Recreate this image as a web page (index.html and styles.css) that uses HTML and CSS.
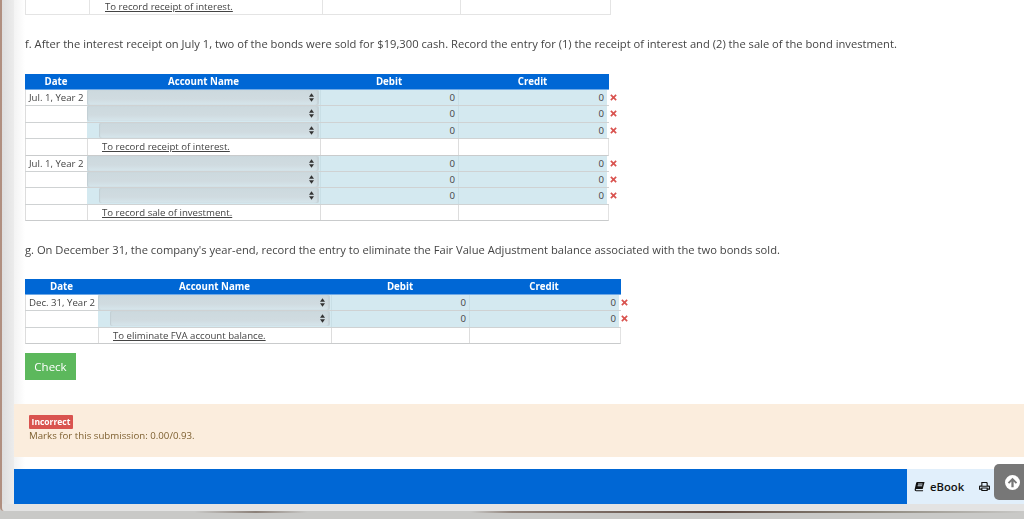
FILE: index.html
```html
<!DOCTYPE html>
<html lang="en">
<head>
<meta charset="utf-8">
<title>Bond investment entries</title>
<link rel="stylesheet" href="styles.css">
</head>
<body>
<svg class="defs" width="0" height="0" aria-hidden="true">
  <symbol id="updown" viewBox="0 0 6 10"><path d="M3 0 6 4H0zM0 6h6l-3 4z"/></symbol>
  <symbol id="cross" viewBox="0 0 8 8"><path d="M1.6.4 4 2.6 6.400.4 7.700 1.700 5.400 4 7.700 6.300 6.400 7.600 4 5.400 1.600 7.600.3 6.300 2.600 4 .3 1.700z"/></symbol>
</svg>
<div class="window">
  <div class="gutter"></div>
  <main class="page">
    <div class="content">
      <div class="top-table">
        <div class="cell c1"></div>
        <div class="cell c2 note"><u>To record receipt of interest.</u></div>
        <div class="cell c3"></div>
        <div class="cell c4"></div>
      </div>

      <p class="question q-f">f. After the interest receipt on July 1, two of the bonds were sold for $19,300 cash. Record the entry for (1) the receipt of interest and (2) the sale of the bond investment.</p>

      <div class="journal journal-f">
        <div class="row head"><div>Date</div><div>Account Name</div><div>Debit</div><div>Credit</div></div>
        <div class="row entry"><div class="date">Jul. 1, Year 2</div><div class="acct"><div class="select"><svg class="arrows"><use href="#updown"/></svg></div></div><div class="num">0</div><div class="num">0<svg class="x"><use href="#cross"/></svg></div></div>
        <div class="row entry"><div class="date"></div><div class="acct"><div class="select"><svg class="arrows"><use href="#updown"/></svg></div></div><div class="num">0</div><div class="num">0<svg class="x"><use href="#cross"/></svg></div></div>
        <div class="row entry"><div class="date"></div><div class="acct indent"><div class="select"><svg class="arrows"><use href="#updown"/></svg></div></div><div class="num">0</div><div class="num">0<svg class="x"><use href="#cross"/></svg></div></div>
        <div class="row memo"><div></div><div class="note"><u>To record receipt of interest.</u></div><div></div><div></div></div>
        <div class="row entry"><div class="date">Jul. 1, Year 2</div><div class="acct"><div class="select"><svg class="arrows"><use href="#updown"/></svg></div></div><div class="num">0</div><div class="num">0<svg class="x"><use href="#cross"/></svg></div></div>
        <div class="row entry"><div class="date"></div><div class="acct"><div class="select"><svg class="arrows"><use href="#updown"/></svg></div></div><div class="num">0</div><div class="num">0<svg class="x"><use href="#cross"/></svg></div></div>
        <div class="row entry"><div class="date"></div><div class="acct indent"><div class="select"><svg class="arrows"><use href="#updown"/></svg></div></div><div class="num">0</div><div class="num">0<svg class="x"><use href="#cross"/></svg></div></div>
        <div class="row memo"><div></div><div class="note"><u>To record sale of investment.</u></div><div></div><div></div></div>
      </div>

      <p class="question q-g">g. On December 31, the company's year-end, record the entry to eliminate the Fair Value Adjustment balance associated with the two bonds sold.</p>

      <div class="journal journal-g">
        <div class="row head"><div>Date</div><div>Account Name</div><div>Debit</div><div>Credit</div></div>
        <div class="row entry"><div class="date">Dec. 31, Year 2</div><div class="acct"><div class="select"><svg class="arrows"><use href="#updown"/></svg></div></div><div class="num">0</div><div class="num">0<svg class="x"><use href="#cross"/></svg></div></div>
        <div class="row entry"><div class="date"></div><div class="acct indent"><div class="select"><svg class="arrows"><use href="#updown"/></svg></div></div><div class="num">0</div><div class="num">0<svg class="x"><use href="#cross"/></svg></div></div>
        <div class="row memo"><div></div><div class="note"><u>To eliminate FVA account balance.</u></div><div></div><div></div></div>
      </div>

      <button class="check" type="button">Check</button>
    </div>

    <section class="feedback">
      <span class="label">Incorrect</span>
      <div class="marks">Marks for this submission: 0.00/0.93.</div>
    </section>

    <footer class="toolbar">
      <div class="tool-fill"></div>
      <div class="tools">
        <svg class="book" viewBox="0 0 12 12"><path d="M3.500 1H11.500L9.500 8.800H2.800C2.200 8.800 2 9.200 2 9.500S2.300 10.200 2.900 10.200H10L9.700 11.200H2.600C1.300 11.200.6 10.400.7 9.300L2.300 2.200C2.500 1.400 2.900 1 3.500 1Z"/><path class="page-line" d="M4.400 3.300H9.300M4 5.200H8.900"/></svg>
        <span class="ebook">eBook</span>
        <svg class="print" viewBox="0 0 12 12"><path d="M2.500 1H8.500L9.500 2V5H11C11.600 5 12 5.400 12 6V9.500H9.500V11H2.500V9.500H0V6C0 5.400.4 5 1 5H2.500ZM3.700 2.200V5.300H8.300V2.600L7.900 2.200ZM1.200 6.400V8.300H2.500V7.200H9.500V8.300H10.800V6.400ZM3.700 8.300V9.800H8.300V8.300Z" fill-rule="evenodd"/></svg>
      </div>
    </footer>
  </main>
</div>
<div class="desk"></div>
<a class="to-top" aria-label="Back to top">
  <svg viewBox="0 0 16 16"><circle cx="8" cy="8" r="8" fill="#fff"/><path d="M8 2.800 13 8 11.500 9.300 9.200 7V13H6.800V7L4.500 9.300 3 8Z" fill="#777"/></svg>
</a>
</body>
</html>
```
FILE: styles.css
```css
* { box-sizing: border-box; }
html, body { margin: 0; height: 519px; overflow: hidden; }
body {
  position: relative;
  background: #c9c9c7;
  font-family: "Open Sans", "Noto Sans", sans-serif;
  color: #444;
}
.defs { position: absolute; }
.window {
  display: flex;
  height: 511px;
  background: #e3e3e3;
  border-left: 2px solid #b08f80;
  border-bottom-left-radius: 4px;
}
.gutter {
  width: 12px;
  height: 504px;
  flex: none;
  background: linear-gradient(90deg, #dedede, #ececec);
}
.page {
  flex: 1;
  min-width: 0;
  height: 504px;
  display: flex;
  flex-direction: column;
  background: linear-gradient(90deg, #f3f3f3, #fff 11px);
}
.content {
  height: 404px;
  padding-left: 11px;
  filter: blur(0.3px);
}
.top-table {
  display: grid;
  grid-template-columns: 64px 233px 138px 150px;
  width: 586px;
  height: 15px;
  border-bottom: 1px solid #e4e4e4;
  border-left: 1px solid #e4e4e4;
}
.cell { border-right: 1px solid #e4e4e4; }
.top-table .note { padding-left: 15px; line-height: 14px; }
.note {
  font-size: 9.650px;
  color: #444;
  white-space: nowrap;
}
.question {
  margin: 0;
  font-size: 11.180px;
  line-height: 16px;
  color: #444;
  white-space: nowrap;
}
.q-f { margin-top: 21px; }
.journal { display: grid; }
.journal-f { width: 582px; margin-top: 22px; --cols: 62px 233px 138px 149px; }
.journal-g { width: 594px; margin-top: 21px; --cols: 73px 233px 138px 150px; }
.q-g { margin-top: 21px; }
.row {
  display: grid;
  grid-template-columns: var(--cols);
  height: 16.380px;
}
.row.head {
  height: 16px;
  border-bottom: 1px solid #6fa9e6;
  background: #0067d5;
  color: #fff;
  font-size: 9.700px;
  font-weight: 700;
  line-height: 16px;
  text-align: center;
}
.entry, .memo {
  border-bottom: 1px solid #cfd2d3;
  font-size: 9.650px;
  line-height: 15px;
}
.memo { border-left: 1px solid #ddd; border-right: 1px solid #e2e2e2; border-bottom-color: #c9cbcc; }
.memo > div { border-right: 1px solid #ddd; }
.memo > div:last-child { border-right: 0; }
.memo .note { padding-left: 14px; }
.date {
  border-left: 1px solid #ddd;
  padding-left: 3px;
  white-space: nowrap;
  color: #444;
  background: #fff;
}
.acct {
  background: #d4e9f0;
  padding-right: 1px;
}
.acct.indent { padding-left: 12px; }
.select {
  position: relative;
  height: 15px;
  border-radius: 2px;
  background: linear-gradient(180deg, #ccd9de 0, #d0dbe0 60%, #d6e6ec 100%);
  box-shadow: inset 1px 0 1px #c3cfd4, inset -2px 0 1px #c6d2d7;
}
.arrows {
  position: absolute;
  right: 5px;
  top: 3px;
  width: 5px;
  height: 9px;
  fill: #333;
}
.num {
  position: relative;
  background: #d4e9f0;
  border-left: 1px solid #c9dfe6;
  text-align: right;
  padding-right: 3px;
  color: #444;
}
.x {
  position: absolute;
  left: 100%;
  margin-left: 3px;
  top: 4px;
  width: 7px;
  height: 7px;
  fill: #d9534f;
}
.journal-g .x { margin-left: 2px; }
.check {
  display: block;
  width: 51px;
  height: 27px;
  margin-top: 9px;
  padding: 0;
  border: 0;
  background: #5cb85c;
  color: #fff;
  font: 400 11.500px "Open Sans", sans-serif;
}
.feedback {
  height: 53px;
  padding: 11px 0 0 15px;
  background: #fbeddd;
  filter: blur(0.3px);
}
.label {
  display: block;
  width: 44px;
  height: 14px;
  border-radius: 1px;
  background: #d9534f;
  color: #fff;
  font-size: 8.500px;
  font-weight: 700;
  line-height: 14px;
  text-align: center;
}
.marks {
  font-size: 9.700px;
  line-height: 14px;
  color: #7d5f2f;
}
.toolbar {
  display: flex;
  height: 35px;
  margin-top: 12px;
}
.tool-fill { flex: 1; background: #0067d5; }
.tools {
  display: flex;
  align-items: center;
  width: 117px;
  padding-left: 7px;
  background: #e1effb;
  color: #111;
}
.book { width: 11px; height: 11px; fill: #111; }
.page-line { fill: none; stroke: #e1effb; stroke-width: 1; }
.ebook { margin-left: 5px; font-size: 11.300px; font-weight: 600; }
.print { width: 11px; height: 11px; margin-left: 15px; fill: #111; }
.desk {
  height: 8px;
  background:
    linear-gradient(90deg, transparent 19%, #8b8078 25%, transparent 30%, transparent 46%, #8f827a 50%, #5d4a42 70%, #8b857a 85%, transparent 100%) 0 0 / 100% 2px no-repeat;
}
.to-top {
  position: absolute;
  left: 994px;
  top: 464px;
  width: 30px;
  height: 36px;
  display: flex;
  align-items: center;
  justify-content: center;
  padding: 0 0 0 6px;
  border-radius: 5px 0 0 5px;
  background: #777;
}
.to-top svg { width: 15px; height: 15px; }
```
